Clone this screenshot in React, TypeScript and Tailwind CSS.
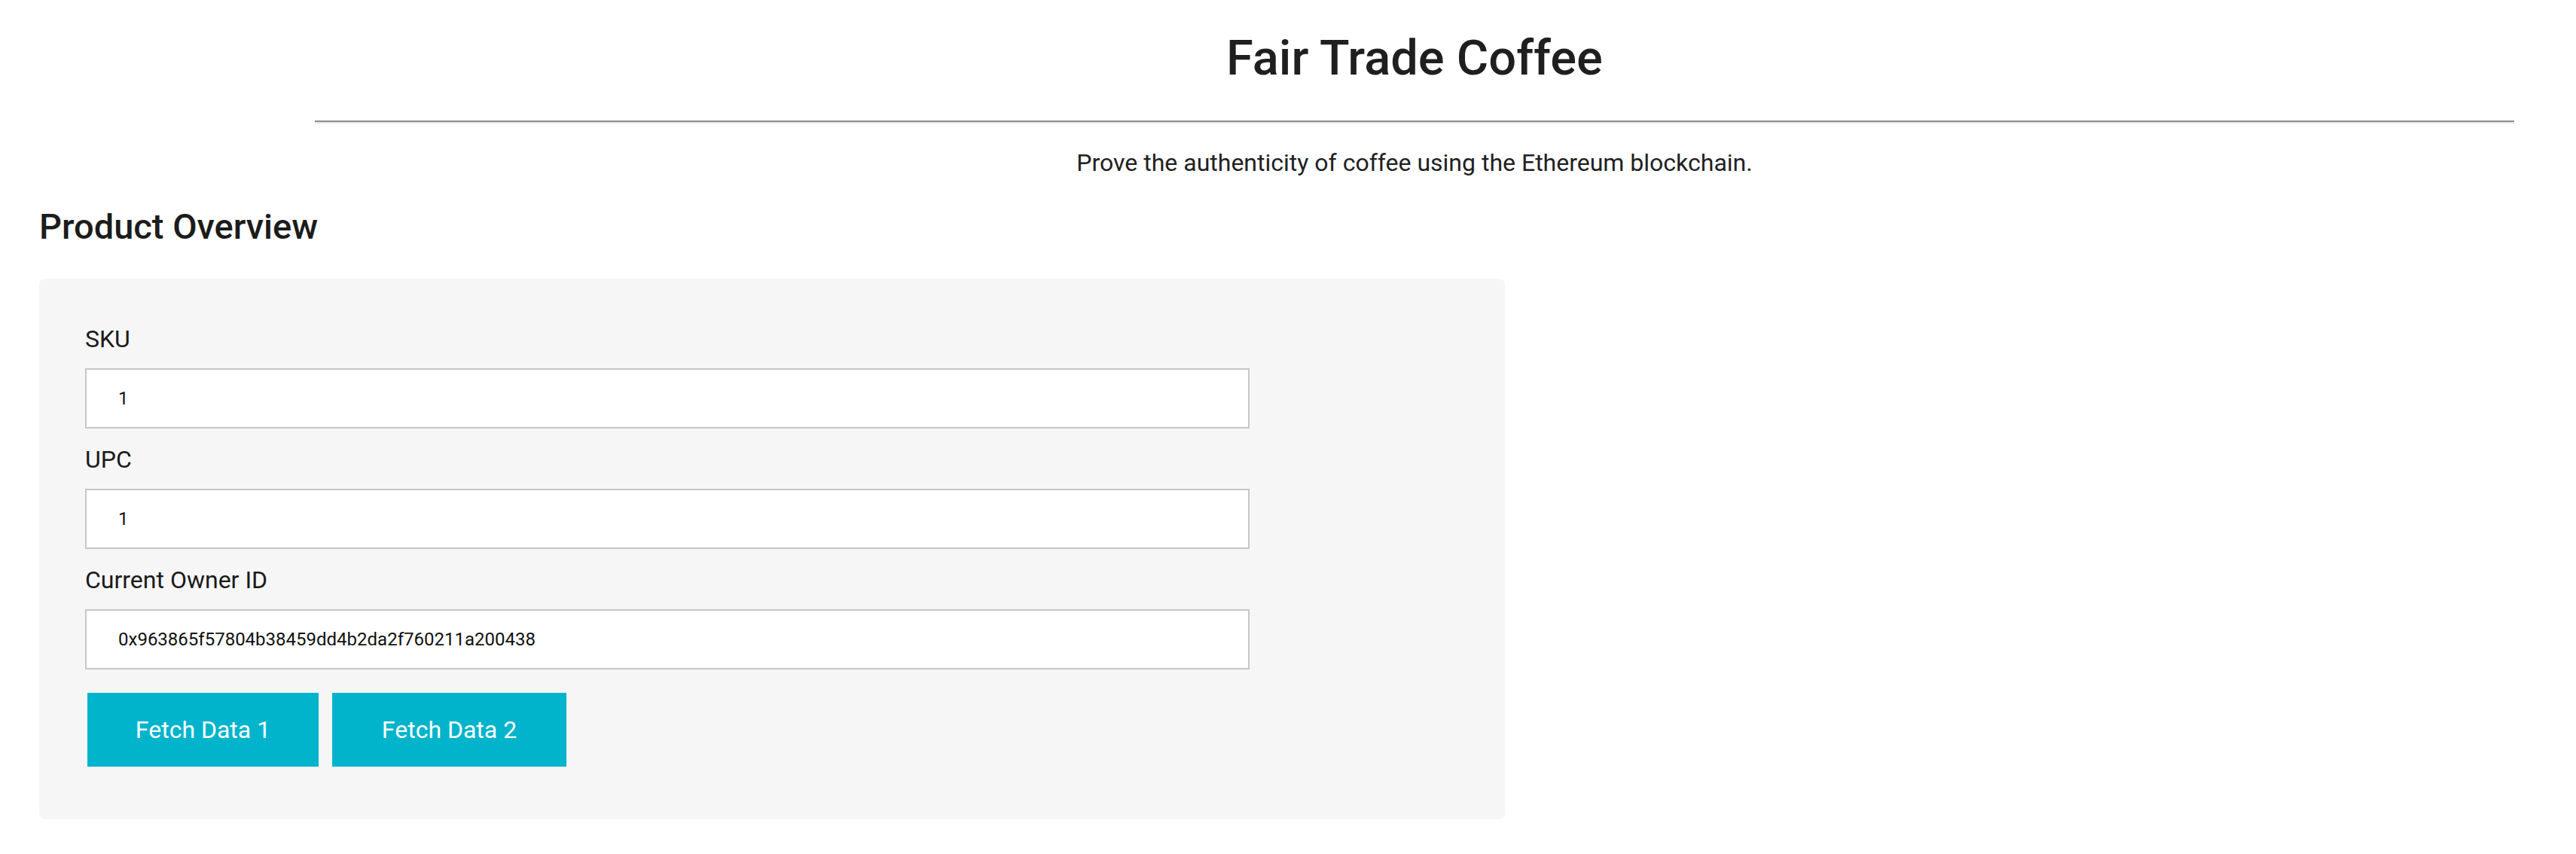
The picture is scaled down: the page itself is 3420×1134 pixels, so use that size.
import React from 'react';

const fields = [
  { label: 'SKU', value: '1' },
  { label: 'UPC', value: '1' },
  { label: 'Current Owner ID', value: '0x963865f57804b38459dd4b2da2f760211a200438' },
];

const Field: React.FC<{ label: string; value: string }> = ({ label, value }) => (
  <div className="mb-[17px]">
    <label className="block text-[32px] leading-[48px] text-[#1a1a1a] mb-[15px]">{label}</label>
    <input
      type="text"
      readOnly
      value={value}
      className="block w-[1546px] h-[80px] bg-white border-2 border-[#c6c6c6] pl-[42px] text-[24px] text-[#111] outline-none"
    />
  </div>
);

export default function App() {
  return (
    <div className="min-h-screen bg-white text-[#212121] font-['Roboto',sans-serif] pb-[50px]">
      {/* Header */}
      <div className="ml-[418px] mr-[82px] pt-[37px] text-center">
        <h1 className="text-[65px] leading-[80px] font-medium text-[#1f1f1f]">Fair Trade Coffee</h1>
        <hr className="mt-[43px] border-0 border-t-2 border-b-2 border-t-[#8e8e8e] border-b-[#e6e6e6]" />
        <p className="mt-[28px] text-[32px] leading-[48px]">
          Prove the authenticity of coffee using the Ethereum blockchain.
        </p>
      </div>

      {/* Product Overview */}
      <div className="px-[52px] mt-[32px]">
        <h2 className="text-[47px] leading-[58px] font-medium text-[#1c1c1c]">Product Overview</h2>
        <div className="mt-[40px] w-[1946px] bg-[#f6f6f6] rounded-[8px] pl-[61px] pt-[56px] pb-[70px]">
          {fields.map(f => (
            <Field key={f.label} label={f.label} value={f.value} />
          ))}
          <div className="flex gap-[18px] ml-[3px] mt-[31px]">
            <button className="w-[307px] h-[98px] bg-[#01b4cc] text-white text-[32px]">Fetch Data 1</button>
            <button className="w-[311px] h-[98px] bg-[#01b4cc] text-white text-[32px]">Fetch Data 2</button>
          </div>
        </div>
      </div>
    </div>
  );
}
